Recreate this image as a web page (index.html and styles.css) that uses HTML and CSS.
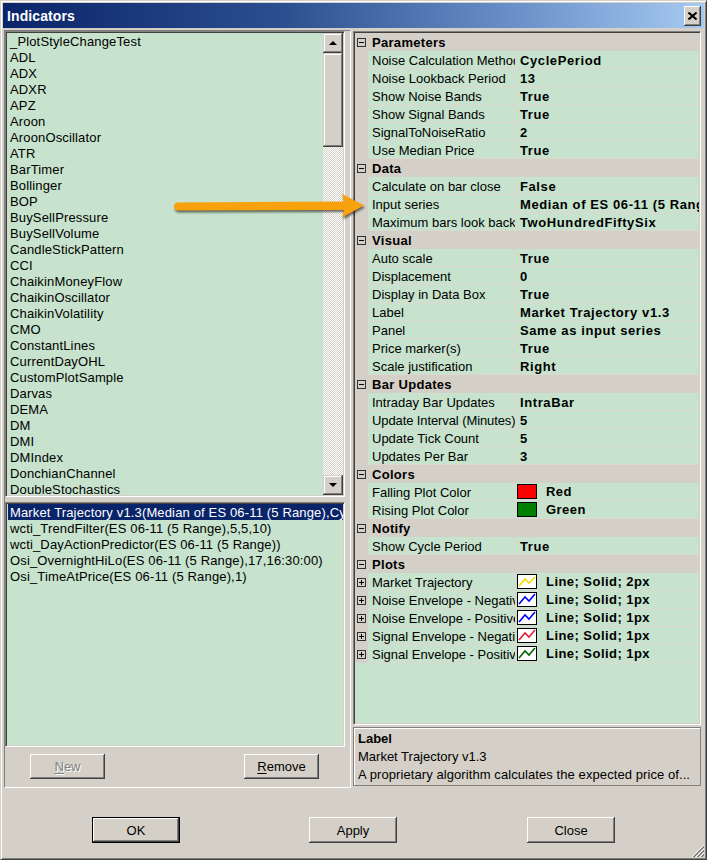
FILE: index.html
```html
<!DOCTYPE html>
<html>
<head>
<meta charset="utf-8">
<title>Indicators</title>
<link rel="stylesheet" href="styles.css">
</head>
<body>
<div class="window">
  <div class="titlebar">
    <span class="title">Indicators</span>
    <button class="close-btn" aria-label="Close">
      <svg width="9" height="8" viewBox="0 0 9 8"><path d="M0.5 0.5 L8.5 7.5 M8.5 0.5 L0.5 7.5" stroke="#000" stroke-width="2" fill="none"/></svg>
    </button>
  </div>
  <div class="panes">
    <div class="left-pane">
      <div class="listbox list-all">
        <ul class="items">
          <li>_PlotStyleChangeTest</li>
          <li>ADL</li>
          <li>ADX</li>
          <li>ADXR</li>
          <li>APZ</li>
          <li>Aroon</li>
          <li>AroonOscillator</li>
          <li>ATR</li>
          <li>BarTimer</li>
          <li>Bollinger</li>
          <li>BOP</li>
          <li>BuySellPressure</li>
          <li>BuySellVolume</li>
          <li>CandleStickPattern</li>
          <li>CCI</li>
          <li>ChaikinMoneyFlow</li>
          <li>ChaikinOscillator</li>
          <li>ChaikinVolatility</li>
          <li>CMO</li>
          <li>ConstantLines</li>
          <li>CurrentDayOHL</li>
          <li>CustomPlotSample</li>
          <li>Darvas</li>
          <li>DEMA</li>
          <li>DM</li>
          <li>DMI</li>
          <li>DMIndex</li>
          <li>DonchianChannel</li>
          <li>DoubleStochastics</li>
        </ul>
        <div class="vscroll">
          <div class="sb-btn"><span class="tri-up"></span></div>
          <div class="sb-thumb"></div>
          <div class="sb-track"></div>
          <div class="sb-btn"><span class="tri-down"></span></div>
        </div>
      </div>
      <div class="listbox list-applied">
        <ul class="items">
          <li class="selected">Market Trajectory v1.3(Median of ES 06-11 (5 Range),CyclePeriod,13,True,True,2,True)</li>
          <li>wcti_TrendFilter(ES 06-11 (5 Range),5,5,10)</li>
          <li>wcti_DayActionPredictor(ES 06-11 (5 Range))</li>
          <li>Osi_OvernightHiLo(ES 06-11 (5 Range),17,16:30:00)</li>
          <li>Osi_TimeAtPrice(ES 06-11 (5 Range),1)</li>
        </ul>
      </div>
      <div class="pane-buttons">
        <button class="btn btn-small btn-disabled"><u>N</u>ew</button>
        <button class="btn btn-small"><u>R</u>emove</button>
      </div>
    </div>
    <div class="right-pane">
      <div class="propgrid">
        <div class="prow cat"><span class="margin"><i class="glyph minus"></i></span><span class="cname">Parameters</span></div>
        <div class="prow"><span class="margin"></span><span class="pname">Noise Calculation Method</span><span class="pval">CyclePeriod</span></div>
        <div class="prow"><span class="margin"></span><span class="pname">Noise Lookback Period</span><span class="pval">13</span></div>
        <div class="prow"><span class="margin"></span><span class="pname">Show Noise Bands</span><span class="pval">True</span></div>
        <div class="prow"><span class="margin"></span><span class="pname">Show Signal Bands</span><span class="pval">True</span></div>
        <div class="prow"><span class="margin"></span><span class="pname">SignalToNoiseRatio</span><span class="pval">2</span></div>
        <div class="prow"><span class="margin"></span><span class="pname">Use Median Price</span><span class="pval">True</span></div>
        <div class="prow cat"><span class="margin"><i class="glyph minus"></i></span><span class="cname">Data</span></div>
        <div class="prow"><span class="margin"></span><span class="pname">Calculate on bar close</span><span class="pval">False</span></div>
        <div class="prow"><span class="margin"></span><span class="pname">Input series</span><span class="pval">Median of ES 06-11 (5 Range)</span></div>
        <div class="prow"><span class="margin"></span><span class="pname">Maximum bars look back</span><span class="pval">TwoHundredFiftySix</span></div>
        <div class="prow cat"><span class="margin"><i class="glyph minus"></i></span><span class="cname">Visual</span></div>
        <div class="prow"><span class="margin"></span><span class="pname">Auto scale</span><span class="pval">True</span></div>
        <div class="prow"><span class="margin"></span><span class="pname">Displacement</span><span class="pval">0</span></div>
        <div class="prow"><span class="margin"></span><span class="pname">Display in Data Box</span><span class="pval">True</span></div>
        <div class="prow"><span class="margin"></span><span class="pname">Label</span><span class="pval">Market Trajectory v1.3</span></div>
        <div class="prow"><span class="margin"></span><span class="pname">Panel</span><span class="pval">Same as input series</span></div>
        <div class="prow"><span class="margin"></span><span class="pname">Price marker(s)</span><span class="pval">True</span></div>
        <div class="prow"><span class="margin"></span><span class="pname">Scale justification</span><span class="pval">Right</span></div>
        <div class="prow cat"><span class="margin"><i class="glyph minus"></i></span><span class="cname">Bar Updates</span></div>
        <div class="prow"><span class="margin"></span><span class="pname">Intraday Bar Updates</span><span class="pval">IntraBar</span></div>
        <div class="prow"><span class="margin"></span><span class="pname pname-tight">Update Interval (Minutes)</span><span class="pval">5</span></div>
        <div class="prow"><span class="margin"></span><span class="pname">Update Tick Count</span><span class="pval">5</span></div>
        <div class="prow"><span class="margin"></span><span class="pname">Updates Per Bar</span><span class="pval">3</span></div>
        <div class="prow cat"><span class="margin"><i class="glyph minus"></i></span><span class="cname">Colors</span></div>
        <div class="prow"><span class="margin"></span><span class="pname">Falling Plot Color</span><span class="pval with-icon"><span class="swatch swatch-red"></span>Red</span></div>
        <div class="prow"><span class="margin"></span><span class="pname">Rising Plot Color</span><span class="pval with-icon"><span class="swatch swatch-green"></span>Green</span></div>
        <div class="prow cat"><span class="margin"><i class="glyph minus"></i></span><span class="cname">Notify</span></div>
        <div class="prow"><span class="margin"></span><span class="pname">Show Cycle Period</span><span class="pval">True</span></div>
        <div class="prow cat"><span class="margin"><i class="glyph minus"></i></span><span class="cname">Plots</span></div>
        <div class="prow"><span class="margin"><i class="glyph plus"></i></span><span class="pname">Market Trajectory</span><span class="pval with-icon"><svg class="plot-icon" width="20" height="15" viewBox="0 0 20 15"><rect x="0.5" y="0.5" width="19" height="14" fill="#fff" stroke="#000"/><polyline points="2,12 8,5 12,9 18,3" fill="none" stroke="#ffd800" stroke-width="1.6"/></svg>Line; Solid; 2px</span></div>
        <div class="prow"><span class="margin"><i class="glyph plus"></i></span><span class="pname">Noise Envelope - Negative</span><span class="pval with-icon"><svg class="plot-icon" width="20" height="15" viewBox="0 0 20 15"><rect x="0.5" y="0.5" width="19" height="14" fill="#fff" stroke="#000"/><polyline points="2,12 8,5 12,9 18,2" fill="none" stroke="#0000ff" stroke-width="1.6"/></svg>Line; Solid; 1px</span></div>
        <div class="prow"><span class="margin"><i class="glyph plus"></i></span><span class="pname">Noise Envelope - Positive</span><span class="pval with-icon"><svg class="plot-icon" width="20" height="15" viewBox="0 0 20 15"><rect x="0.5" y="0.5" width="19" height="14" fill="#fff" stroke="#000"/><polyline points="2,12 8,5 12,9 18,2" fill="none" stroke="#0000ff" stroke-width="1.6"/></svg>Line; Solid; 1px</span></div>
        <div class="prow"><span class="margin"><i class="glyph plus"></i></span><span class="pname">Signal Envelope - Negative</span><span class="pval with-icon"><svg class="plot-icon" width="20" height="15" viewBox="0 0 20 15"><rect x="0.5" y="0.5" width="19" height="14" fill="#fff" stroke="#000"/><polyline points="2,12 8,5 12,9 18,2" fill="none" stroke="#e0203c" stroke-width="1.6"/></svg>Line; Solid; 1px</span></div>
        <div class="prow"><span class="margin"><i class="glyph plus"></i></span><span class="pname">Signal Envelope - Positive</span><span class="pval with-icon"><svg class="plot-icon" width="20" height="15" viewBox="0 0 20 15"><rect x="0.5" y="0.5" width="19" height="14" fill="#fff" stroke="#000"/><polyline points="2,12 8,5 12,9 18,2" fill="none" stroke="#006400" stroke-width="1.6"/></svg>Line; Solid; 1px</span></div>
      </div>
      <div class="desc">
        <div class="desc-title">Label</div>
        <div>Market Trajectory v1.3</div>
        <div class="desc-text">A proprietary algorithm calculates the expected price of...</div>
      </div>
    </div>
  </div>
  <div class="dialog-buttons">
    <button class="btn btn-dialog btn-default">OK</button>
    <button class="btn btn-dialog">Apply</button>
    <button class="btn btn-dialog btn-close">Close</button>
  </div>
  <svg class="arrow" width="200" height="36" viewBox="0 0 200 36">
    <path d="M6 14.5 L172 13.5 L170 6 L192 17.5 L170 29.5 L172 22 L6 22.5 A4 4 0 0 1 6 14.5 Z" fill="#f7a20c"/>
  </svg>
  <svg class="grip" width="14" height="14" viewBox="0 0 14 14" shape-rendering="crispEdges">
    <path d="M13 1 L1 13" stroke="#fff"/><path d="M13 2 L2 13 M13 3 L3 13" stroke="#808080"/>
    <path d="M13 5 L5 13" stroke="#fff"/><path d="M13 6 L6 13 M13 7 L7 13" stroke="#808080"/>
    <path d="M13 9 L9 13" stroke="#fff"/><path d="M13 10 L10 13 M13 11 L11 13" stroke="#808080"/>
  </svg>
</div>
</body>
</html>
```

FILE: styles.css
```css
* { box-sizing: border-box; }

body {
  margin: 0;
  font-family: "Liberation Sans", Arial, sans-serif;
  font-size: 13px;
  color: #000;
  background: #d4d0c8;
}

.window {
  position: relative;
  width: 707px;
  height: 860px;
  background: #d4d0c8;
  border: 1px solid;
  border-color: #d4d0c8 #404040 #404040 #d4d0c8;
  box-shadow: inset 1px 1px #fff, inset -1px -1px #808080;
  padding: 2px;
  display: flex;
  flex-direction: column;
}

/* Title bar */
.titlebar {
  height: 25px;
  flex: none;
  display: flex;
  align-items: center;
  justify-content: space-between;
  padding: 0 3px 0 4px;
  background: linear-gradient(90deg, #0a246a 0%, #2c4f8f 40%, #6f94cc 75%, #a6caf0 100%);
}
.title {
  color: #fff;
  font-weight: bold;
  font-size: 14px;
  letter-spacing: 0.1px;
}
.close-btn {
  width: 17px;
  height: 20px;
  padding: 0;
  border: none;
  background: #d4d0c8;
  box-shadow: inset -1px -1px #404040, inset 1px 1px #fff, inset -2px -2px #808080, inset 2px 2px #d4d0c8;
  display: flex;
  align-items: center;
  justify-content: center;
}
.close-btn svg { display: block; }

/* Panes */
.panes {
  display: flex;
  align-items: flex-start;
  padding: 2px 3px 0 1px;
  flex: none;
}
.left-pane {
  width: 347px;
  height: 758px;
  border: 1px solid;
  border-color: #808080 #fff #fff #808080;
  padding: 0 5px 0 0;
  display: flex;
  flex-direction: column;
}
.right-pane {
  width: 348px;
  margin: 1px 0 0 2px;
  display: flex;
  flex-direction: column;
  gap: 2px;
}

/* List boxes */
.listbox {
  border: 1px solid;
  border-color: #808080 #fff #fff #808080;
  box-shadow: inset 1px 1px #404040, inset -1px -1px #d4d0c8;
  padding: 1px;
  background: #c7e3cd;
  display: flex;
  overflow: hidden;
}
.list-all { height: 466px; }
.list-applied { height: 245px; margin-top: 5px; }

.items {
  list-style: none;
  margin: 0;
  padding: 0;
  flex: 1;
  min-width: 0;
  overflow: hidden;
}
.items li {
  height: 16px;
  line-height: 15px;
  padding-top: 1px;
  margin-left: 1px;
  padding-left: 2px;
  white-space: nowrap;
  overflow: hidden;
  letter-spacing: 0.15px;
}
.items li.selected {
  background: #0a246a;
  color: #fff;
}

/* Scrollbar */
.vscroll {
  width: 20px;
  flex: none;
  display: flex;
  flex-direction: column;
}
.sb-btn, .sb-thumb {
  background: #d4d0c8;
  box-shadow: inset -1px -1px #404040, inset 1px 1px #d4d0c8, inset -2px -2px #808080, inset 2px 2px #fff;
}
.sb-btn {
  height: 20px;
  flex: none;
  display: flex;
  align-items: center;
  justify-content: center;
}
.sb-thumb { height: 94px; flex: none; }
.sb-track {
  flex: 1;
  background: repeating-conic-gradient(#d4d0c8 0 25%, #fff 0 50%) 0 0 / 2px 2px;
}
.tri-up, .tri-down {
  width: 0;
  height: 0;
  border-left: 4px solid transparent;
  border-right: 4px solid transparent;
}
.tri-up { border-bottom: 4px solid #000; margin-top: -1px; }
.tri-down { border-top: 4px solid #000; }

/* Buttons */
.btn {
  font-family: "Liberation Sans", Arial, sans-serif;
  font-size: 13px;
  color: #000;
  padding: 0;
  border: none;
  background: #d4d0c8;
  box-shadow: inset -1px -1px #404040, inset 1px 1px #fff, inset -2px -2px #808080, inset 2px 2px #d4d0c8;
}
.btn u { text-decoration: underline; text-underline-offset: 2px; }
.btn-small { width: 75px; height: 25px; }
.btn-disabled {
  color: #808080;
  text-shadow: 1px 1px 0 #fff;
}
.pane-buttons {
  display: flex;
  justify-content: space-between;
  padding: 0 26px 0 25px;
  margin-top: 7px;
}

.dialog-buttons {
  display: flex;
  gap: 129px;
  padding: 29px 0 0 89px;
}
.btn-dialog { width: 88px; height: 26px; }
.btn-default {
  border: 1px solid #000;
  box-shadow: inset -1px -1px #404040, inset 1px 1px #fff, inset -2px -2px #808080;
}
.btn-close { margin-left: 1px; }

/* Property grid */
.propgrid {
  height: 694px;
  border: 1px solid;
  border-color: #808080 #fff #fff #808080;
  box-shadow: inset 1px 1px #404040, inset -1px -1px #d4d0c8;
  padding: 1px;
  background: #c7e3cd;
  overflow: hidden;
}
.prow {
  display: flex;
  height: 18px;
  line-height: 15px;
  white-space: nowrap;
}
.prow > span:not(.margin) { padding-top: 2px; }
.margin {
  width: 13px;
  flex: none;
  background: #d4d0c8;
  display: flex;
  align-items: center;
  padding-left: 2px;
}
.pname {
  width: 148px;
  flex: none;
  padding-left: 4px;
  border-bottom: 1px solid #dcd8d0;
  border-right: 1px solid #dcd8d0;
  overflow: hidden;
}
.pname-tight { letter-spacing: -0.1px; }
.pval {
  flex: 1;
  min-width: 0;
  padding-left: 4px;
  font-weight: bold;
  letter-spacing: 0.6px;
  border-bottom: 1px solid #dcd8d0;
  overflow: hidden;
}
.prow > .pval.with-icon {
  padding-left: 1px;
  padding-top: 0;
  display: flex;
  align-items: center;
  gap: 9px;
  letter-spacing: 0.45px;
}
.cat { background: #d4d0c8; }
.cname {
  padding-left: 4px;
  font-weight: bold;
  letter-spacing: 0.3px;
}

.glyph {
  position: relative;
  display: block;
  width: 9px;
  height: 9px;
  border: 1px solid #303030;
  background: transparent;
}
.glyph::before {
  content: "";
  position: absolute;
  left: 1px;
  top: 3px;
  width: 5px;
  height: 1px;
  background: #000;
}
.glyph.plus::after {
  content: "";
  position: absolute;
  left: 3px;
  top: 1px;
  width: 1px;
  height: 5px;
  background: #000;
}

.swatch {
  display: block;
  width: 20px;
  height: 15px;
  border: 1px solid #000;
  flex: none;
}
.swatch-red { background: #ff0000; }
.swatch-green { background: #008000; }
.plot-icon { display: block; flex: none; }

/* Description */
.desc {
  height: 59px;
  border: 1px solid #808080;
  box-shadow: inset 1px 1px #fff;
  padding: 2px 4px 0;
  line-height: 18px;
  white-space: nowrap;
  overflow: hidden;
}
.desc-title { font-weight: bold; }
.desc-text { letter-spacing: 0.08px; }

/* Overlays */
.arrow {
  position: absolute;
  left: 171px;
  top: 187px;
  filter: drop-shadow(1px 2px 1px rgba(0, 0, 0, 0.55));
}
.grip {
  position: absolute;
  right: 1px;
  bottom: 1px;
}
```
